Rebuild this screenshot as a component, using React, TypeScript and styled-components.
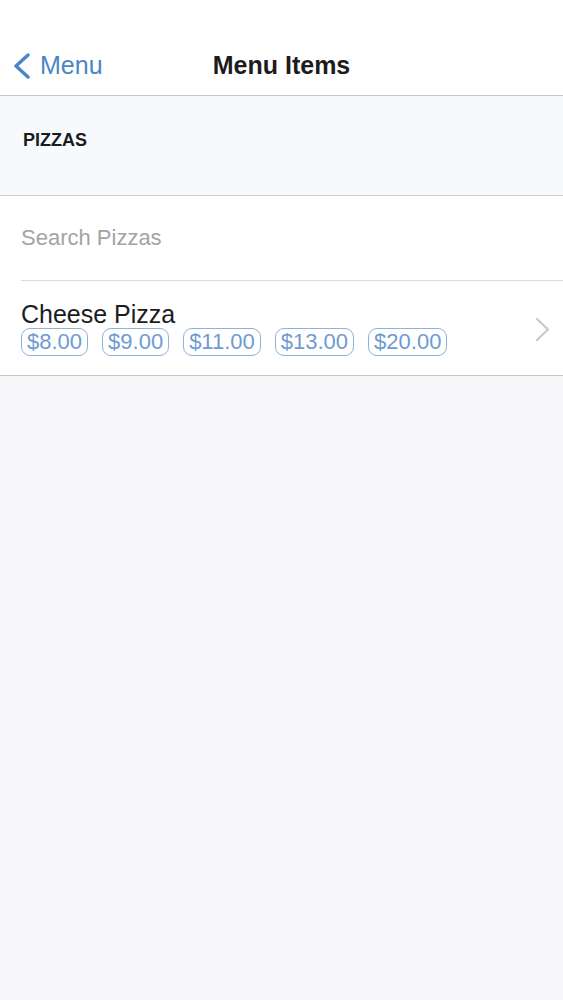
import React from 'react';
import styled, { createGlobalStyle } from 'styled-components';

const GlobalStyle = createGlobalStyle`
  html, body {
    margin: 0;
    padding: 0;
    background: #f7f7f9;
    font-family: 'Liberation Sans', Arial, sans-serif;
  }
`;

const Screen = styled.div`
  display: flex;
  flex-direction: column;
  width: 100%;
  min-height: 1000px;
  background: #f7f7f9;
`;

const NavBar = styled.div`
  position: relative;
  display: flex;
  align-items: center;
  height: 96px;
  padding-top: 36px;
  box-sizing: border-box;
  background: #ffffff;
  border-bottom: 1px solid #c8c8cc;
`;

const BackButton = styled.div`
  display: flex;
  align-items: center;
  gap: 9px;
  padding-left: 12px;
  color: #4a86c5;
  font-size: 25px;
`;

const Title = styled.div`
  position: absolute;
  left: 0;
  right: 0;
  top: 36px;
  bottom: 0;
  display: flex;
  align-items: center;
  justify-content: center;
  font-size: 25px;
  font-weight: 700;
  color: #1c1c1e;
  pointer-events: none;
`;

const SectionHeader = styled.div`
  display: flex;
  align-items: flex-start;
  height: 100px;
  padding: 34px 0 0 23px;
  box-sizing: border-box;
  background: #f6fafd;
  border-bottom: 1px solid #cfcfd3;
  font-size: 18px;
  font-weight: 700;
  color: #1c1c1e;
`;

const Group = styled.div`
  display: flex;
  flex-direction: column;
  background: #ffffff;
  border-bottom: 1px solid #c8c8cc;
`;

const SearchRow = styled.div`
  display: flex;
  align-items: center;
  height: 85px;
  box-sizing: border-box;
  margin-left: 21px;
  border-bottom: 1px solid #dcdce0;
`;

const SearchInput = styled.input`
  flex: 1;
  border: 0;
  outline: 0;
  padding: 0;
  background: transparent;
  font-family: inherit;
  font-size: 22px;
  color: #333;
  &::placeholder {
    color: #a3a3a6;
  }
`;

const ItemRow = styled.div`
  display: flex;
  align-items: center;
  height: 94px;
  padding: 0 13px 0 21px;
`;

const ItemBody = styled.div`
  display: flex;
  flex-direction: column;
  flex: 1;
`;

const ItemName = styled.div`
  font-size: 25px;
  line-height: 28px;
  color: #1c1c1e;
`;

const Prices = styled.div`
  display: flex;
  gap: 14px;
`;

const Price = styled.span`
  display: inline-block;
  padding: 0 5px;
  border: 1px solid #8fb2dd;
  border-radius: 9px;
  font-size: 22px;
  line-height: 26px;
  color: #6f9bd3;
`;

const Chevron = styled.svg`
  flex: none;
  margin-top: 3px;
`;

const prices = ['$8.00', '$9.00', '$11.00', '$13.00', '$20.00'];

const App = () => (
  <>
    <GlobalStyle />
    <Screen>
      <NavBar>
        <BackButton>
          <svg width="19" height="26" viewBox="0 0 19 26" fill="none">
            <path d="M16 2 L4 13 L16 24" stroke="#4a86c5" strokeWidth="3.4" strokeLinecap="round" strokeLinejoin="round" />
          </svg>
          <span>Menu</span>
        </BackButton>
        <Title>Menu Items</Title>
      </NavBar>
      <SectionHeader>PIZZAS</SectionHeader>
      <Group>
        <SearchRow>
          <SearchInput placeholder="Search Pizzas" />
        </SearchRow>
        <ItemRow>
          <ItemBody>
            <ItemName>Cheese Pizza</ItemName>
            <Prices>
              {prices.map((p) => (
                <Price key={p}>{p}</Price>
              ))}
            </Prices>
          </ItemBody>
          <Chevron width="15" height="25" viewBox="0 0 15 25" fill="none">
            <path d="M2 2 L13 12.5 L2 23" stroke="#c7c7cc" strokeWidth="2.2" strokeLinecap="round" strokeLinejoin="round" />
          </Chevron>
        </ItemRow>
      </Group>
    </Screen>
  </>
);

export default App;
